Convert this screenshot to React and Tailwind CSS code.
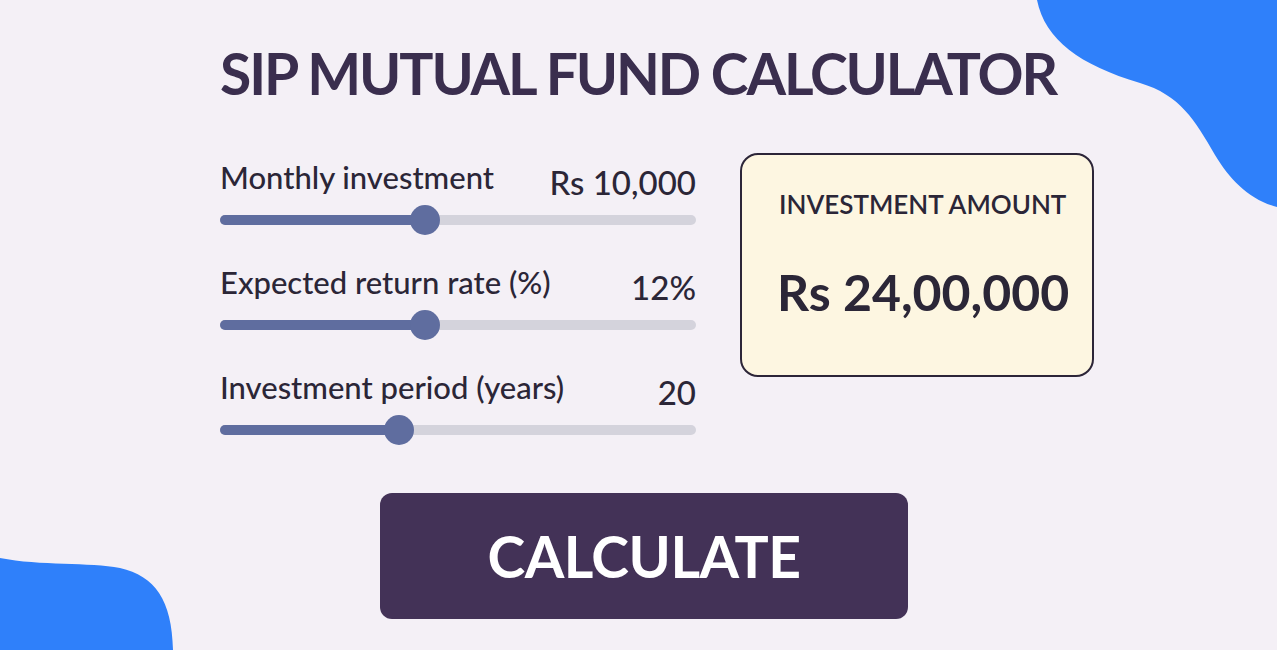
import React from "react";

const sliders = [
  { label: "Monthly investment", value: "Rs 10,000", pct: 43 },
  { label: "Expected return rate (%)", value: "12%", pct: 43 },
  { label: "Investment period (years)", value: "20", pct: 37.7 },
];

const Slider = ({ pct }) => (
  <div className="relative h-[30px] flex items-center">
    <div className="w-full h-[10px] rounded-full bg-[#d4d3dc]" />
    <div
      className="absolute left-0 h-[10px] rounded-full bg-[#5f6d9f]"
      style={{ width: `${pct}%` }}
    />
    <div
      className="absolute w-[30px] h-[30px] rounded-full bg-[#5f6d9f] -translate-x-1/2"
      style={{ left: `${pct}%` }}
    />
  </div>
);

export default function App() {
  return (
    <div
      className="relative w-full h-[650px] overflow-hidden bg-[#f4f0f6]"
      style={{ fontFamily: "Lato, 'Open Sans', sans-serif" }}
    >
      {/* decorative blobs */}
      <svg
        className="absolute inset-0 pointer-events-none"
        width="1277"
        height="650"
        viewBox="0 0 1277 650"
      >
        <path
          d="M1037,0 C1045,40 1080,65 1140,83 C1180,95 1195,120 1215,155 C1230,180 1250,200 1277,207 L1277,0 Z"
          fill="#2f80fa"
        />
        <path
          d="M0,558 C40,566 90,562 120,568 C155,576 172,600 173,650 L0,650 Z"
          fill="#2f80fa"
        />
      </svg>

      <div className="relative pl-[220px] pt-[45px]">
        <h1 className="text-[57px] leading-none font-bold text-[#3a2e4e] tracking-[-2.1px]">
          SIP MUTUAL FUND CALCULATOR
        </h1>

        <div className="flex gap-[44px] mt-[59px]">
          <div className="w-[476px] flex flex-col gap-[31px]">
            {sliders.map((s) => (
              <div key={s.label} className="flex flex-col gap-[12px]">
                <div className="flex items-end justify-between text-[#2b2637]">
                  <span className="text-[31px] leading-[32px] font-medium">{s.label}</span>
                  <span className="text-[33px] leading-[32px] font-medium translate-y-[5px]">
                    {s.value}
                  </span>
                </div>
                <Slider pct={s.pct} />
              </div>
            ))}
          </div>

          <div className="w-[354px] h-[224px] -mt-[8px] rounded-[18px] border-[2.5px] border-[#2c2538] bg-[#fdf6e1] pl-[37px] pt-[36px] text-[#2b2637]">
            <div className="text-[26px] leading-none font-semibold">INVESTMENT AMOUNT</div>
            <div className="text-[50px] leading-none font-bold mt-[50px] -ml-[2px]">Rs 24,00,000</div>
          </div>
        </div>

        <button className="mt-[48px] ml-[160px] w-[528px] h-[126px] rounded-[12px] bg-[#433257] text-white text-[57px] font-bold leading-none tracking-[-0.5px]">
          CALCULATE
        </button>
      </div>
    </div>
  );
}
